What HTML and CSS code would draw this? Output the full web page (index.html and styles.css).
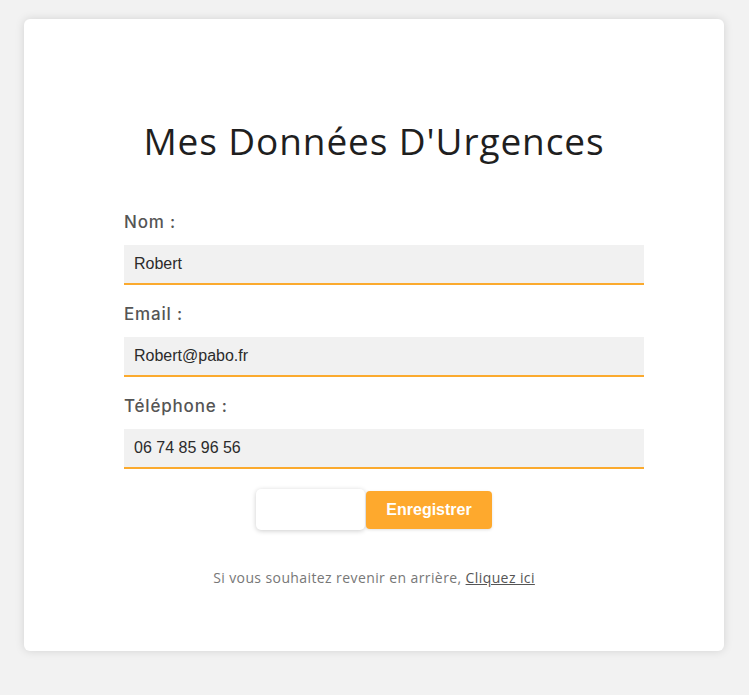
FILE: index.html
```html
<!DOCTYPE html>
<html lang="fr">
<head>
<meta charset="utf-8">
<title>Mes Données D'Urgences</title>
<link rel="stylesheet" href="styles.css">
</head>
<body>
<main class="card">
  <h1 class="title">Mes Données D'Urgences</h1>
  <form class="form">
    <label class="label" for="nom">Nom :</label>
    <input class="field" id="nom" type="text" value="Robert">
    <label class="label" for="email">Email :</label>
    <input class="field" id="email" type="text" value="Robert@pabo.fr">
    <label class="label" for="tel">Téléphone :</label>
    <input class="field" id="tel" type="text" value="06 74 85 96 56">
    <div class="actions">
      <div class="blank"></div>
      <button class="save" type="button">Enregistrer</button>
    </div>
  </form>
  <p class="back">Si vous souhaitez revenir en arrière, <a class="back-link" href="#">Cliquez ici</a></p>
</main>
</body>
</html>
```
FILE: styles.css
```css
html, body {
  margin: 0;
  padding: 0;
}
body {
  background: #f2f2f2;
  padding: 19px 25px 44px 24px;
  font-family: "Open Sans", "DejaVu Sans", sans-serif;
}
.card {
  width: 700px;
  height: 632px;
  box-sizing: border-box;
  background: #fff;
  border-radius: 6px;
  box-shadow: 0 0 10px rgba(0, 0, 0, 0.13);
  padding-top: 100px;
}
.title {
  margin: 0;
  text-align: center;
  font-size: 37px;
  font-weight: 400;
  letter-spacing: 0.9px;
  line-height: 44px;
  color: #1f1f1f;
}
.form {
  width: 500px;
  margin: 47px auto 0;
  display: flex;
  flex-direction: column;
}
.label {
  font-family: Inter, "Open Sans", sans-serif;
  font-size: 17px;
  font-weight: 500;
  letter-spacing: 0.8px;
  color: #555;
  line-height: 24px;
  margin-bottom: 11px;
}
.field {
  width: 100%;
  height: 38px;
  padding: 0 10px;
  box-sizing: content-box;
  border: 0;
  border-bottom: 2px solid #fbaa2e;
  background: #f1f1f1;
  font-family: "Liberation Sans", Arial, sans-serif;
  font-size: 16px;
  color: #2b2b2b;
  margin: 0 0 17px;
  outline: none;
}
.actions {
  display: flex;
  justify-content: center;
  align-items: center;
  margin-top: 3px;
}
.blank {
  width: 109px;
  height: 41px;
  background: #fff;
  border-radius: 5px;
  box-shadow: 0 1px 5px rgba(0, 0, 0, 0.2);
}
.save {
  margin-left: 1px;
  height: 38px;
  padding: 0 20px;
  border: 0;
  border-radius: 4px;
  background: #fea92d;
  color: #fff;
  font-family: "Liberation Sans", Arial, sans-serif;
  font-weight: 700;
  font-size: 16px;
  box-shadow: 0 1px 3px rgba(0, 0, 0, 0.12);
}
.back {
  margin: 38px 0 0;
  text-align: center;
  font-size: 14px;
  letter-spacing: 0.4px;
  color: #777;
}
.back-link {
  color: #555;
}
```
